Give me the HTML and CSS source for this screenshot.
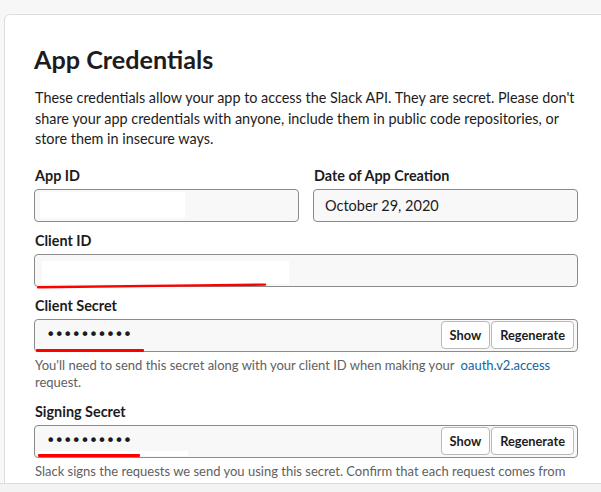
FILE: index.html
```html
<!DOCTYPE html>
<html>
<head>
<meta charset="utf-8">
<link rel="stylesheet" href="styles.css">
</head>
<body>
<div class="viewport">
  <section class="card">
    <h1 class="title">App Credentials</h1>
    <p class="intro">These credentials allow your app to access the Slack API. They are secret. Please don't share your app credentials with anyone, include them in public code repositories, or store them in insecure ways.</p>

    <div class="row">
      <div class="field">
        <label class="label">App ID</label>
        <div class="input"><span class="redact redact-appid"></span></div>
      </div>
      <div class="field">
        <label class="label">Date of App Creation</label>
        <div class="input"><span class="value">October 29, 2020</span></div>
      </div>
    </div>

    <div class="field">
      <label class="label">Client ID</label>
      <div class="input marked">
        <span class="redact redact-clientid"></span>
        <svg class="scribble scribble-clientid" width="232" height="6" viewBox="0 0 232 6"><path d="M1 4.2 C 60 3.4, 150 2.6, 228 1.6" fill="none" stroke="#ff0000" stroke-width="2.4" stroke-linecap="round"/></svg>
      </div>
    </div>

    <div class="field">
      <label class="label">Client Secret</label>
      <div class="input secret marked">
        <span class="dots">••••••••••</span>
        <span class="buttons"><button class="btn">Show</button><button class="btn">Regenerate</button></span>
        <span class="underline underline-secret"></span>
      </div>
      <p class="help">You'll need to send this secret along with your client ID when making your <a class="link" href="#">oauth.v2.access</a> request.</p>
    </div>

    <div class="field">
      <label class="label">Signing Secret</label>
      <div class="input secret marked">
        <span class="dots">••••••••••</span>
        <span class="buttons"><button class="btn">Show</button><button class="btn">Regenerate</button></span>
        <span class="whiteout"></span>
        <span class="underline underline-signing"></span>
      </div>
      <p class="help">Slack signs the requests we send you using this secret. Confirm that each request comes from Slack by verifying its unique signature.</p>
    </div>
  </section>
</div>
<div class="bottombar"></div>
</body>
</html>
```
FILE: styles.css
```css
html, body {
  margin: 0;
  padding: 0;
}
body {
  background: #f7f7f7;
  font-family: Lato, "Liberation Sans", sans-serif;
  color: #1d1c1d;
  overflow: hidden;
  height: 492px;
}
.viewport {
  height: 483px;
  overflow: hidden;
  padding-top: 14px;
  box-sizing: border-box;
}
.card {
  margin-left: 4px;
  width: 640px;
  min-height: 520px;
  background: #ffffff;
  border: 1px solid #dddddd;
  border-radius: 6px;
  padding: 29px 0 0 29px;
  box-sizing: border-box;
}
.card > * {
  width: 544px;
}
.title {
  margin: 0 0 14px 0;
  font-size: 25.2px;
  line-height: 30px;
  font-weight: 700;
}
.intro {
  margin: 0 0 16px 1px;
  font-size: 14.4px;
  line-height: 20.5px;
  width: 545px;
}
.row {
  display: grid;
  grid-template-columns: 1fr 1fr;
  column-gap: 14px;
}
.field {
  margin-bottom: 9px;
}
.label {
  display: block;
  font-size: 14.4px;
  line-height: 20px;
  font-weight: 700;
  margin: 0 0 3px 1px;
}
.input {
  position: relative;
  height: 33px;
  box-sizing: border-box;
  border: 1px solid #8b8b8b;
  border-radius: 4px;
  background: #f8f8f8;
  display: flex;
  align-items: center;
  padding: 0 5px;
}
.value {
  font-size: 14.5px;
  padding-left: 6px;
}
.redact {
  background: #ffffff;
  display: block;
}
.redact-appid {
  width: 145px;
  height: 26px;
}
.redact-clientid {
  width: 247px;
  height: 23px;
  margin-left: 2px;
  align-self: flex-start;
  margin-top: 6px;
}
.scribble {
  position: absolute;
  left: 2px;
  top: 28px;
}
.secret {
  padding: 0 3px 0 11px;
  justify-content: space-between;
}
.dots {
  font-family: "DejaVu Sans", sans-serif;
  font-size: 16px;
  letter-spacing: -0.9px;
  line-height: 1;
}
.buttons {
  display: flex;
  gap: 1px;
}
.btn {
  font-family: Lato, "Liberation Sans", sans-serif;
  font-size: 12.8px;
  font-weight: 700;
  color: #1d1c1d;
  background: #ffffff;
  border: 1px solid #b9b9b9;
  border-radius: 4px;
  height: 28px;
  padding: 0 8px;
  margin: 0;
}
.underline {
  position: absolute;
  height: 2.5px;
  background: #ff0000;
  border-radius: 1px;
}
.underline-secret {
  left: 1px;
  top: 29.5px;
  width: 108px;
}
.underline-signing {
  left: 3px;
  top: 28.5px;
  width: 102px;
}
.whiteout {
  position: absolute;
  left: 3px;
  top: 25.5px;
  width: 150px;
  height: 5px;
  background: #ffffff;
}
.help {
  margin: 5px 0 10px 1px;
  font-size: 13px;
  line-height: 17.5px;
  color: #616061;
}
.link {
  color: #1264a3;
  text-decoration: none;
  margin-left: 3px;
}
.bottombar {
  height: 9px;
  border-top: 1px solid #dcdcdc;
  background: #f3f3f3;
}
```
